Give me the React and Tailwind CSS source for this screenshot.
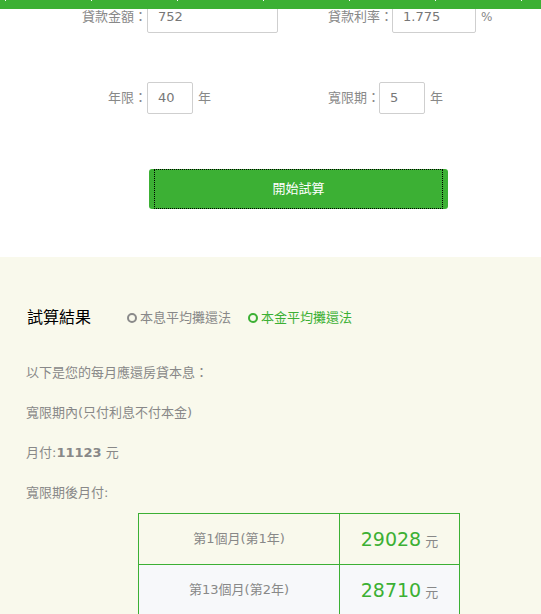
const FONT = "font-['DejaVu_Sans','Noto_Sans_CJK_TC',sans-serif]";

function Field({ value, width }) {
  return (
    <div
      className={`flex h-[32px] shrink-0 items-center rounded-[2px] border border-[#cfcfcf] bg-white pl-[10px] text-[13px] text-[#777] ${width}`}
    >
      {value}
    </div>
  );
}

function Radio({ label, active }) {
  return (
    <span className={`flex items-center text-[13px] ${active ? "text-[#3cb034]" : "text-[#888]"}`}>
      <span
        className={`mr-[3px] inline-block h-[10px] w-[10px] rounded-full border-[2px] ${
          active ? "border-[#3cb034]" : "border-[#8a8a8a]"
        }`}
      />
      {label}
    </span>
  );
}

export default function App() {
  return (
    <div className={`relative min-h-[614px] w-[541px] overflow-hidden bg-white ${FONT}`}>
      {/* sticky nav bar over the scrolled form */}
      <div className="absolute left-0 right-0 top-0 z-10 flex h-[9px] bg-[#3cb034] pl-[5px]">
        {[0, 1, 2, 3, 4, 5, 6].map((i) => (
          <div key={i} className="w-[86px] shrink-0">
            <span className="block h-[1px] w-[1px] bg-white" />
          </div>
        ))}
      </div>

      <section className="bg-white pb-[48px] pt-[1px]">
        <div className="flex h-[32px] items-center whitespace-nowrap text-[13px] text-[#888]">
          <div className="flex w-[278px] shrink-0 items-center">
            <span className="w-[147px] shrink-0 text-right">貸款金額：</span>
            <Field value="752" width="w-[131px]" />
          </div>
          <div className="ml-[50px] flex items-center">
            <span className="w-[64px] shrink-0">貸款利率：</span>
            <Field value="1.775" width="w-[84px]" />
            <span className="ml-[5px] text-[12px]">%</span>
          </div>
        </div>

        <div className="mt-[49px] flex h-[32px] items-center whitespace-nowrap text-[13px] text-[#888]">
          <div className="flex w-[278px] shrink-0 items-center">
            <span className="w-[147px] shrink-0 text-right">年限：</span>
            <Field value="40" width="w-[46px]" />
            <span className="ml-[5px]">年</span>
          </div>
          <div className="ml-[50px] flex items-center">
            <span className="w-[51px] shrink-0">寬限期：</span>
            <Field value="5" width="w-[46px]" />
            <span className="ml-[5px]">年</span>
          </div>
        </div>

        <button
          type="button"
          className="ml-[149px] mt-[55px] flex h-[40px] w-[299px] rounded-[3px] bg-[#3cb034] px-[5px] text-[13px] text-white"
        >
          <span className="flex h-full w-full items-center justify-center border border-dotted border-black">
            開始試算
          </span>
        </button>
      </section>

      <section className="min-h-[357px] bg-[#f9f9ec] pt-[51px]">
        <div className="flex h-[20px] items-center">
          <h2 className="ml-[27px] w-[100px] text-[16px] font-normal text-black">試算結果</h2>
          <div className="flex items-center gap-[17px]">
            <Radio label="本息平均攤還法" />
            <Radio label="本金平均攤還法" active />
          </div>
        </div>

        <div className="mt-[35px] flex flex-col gap-[20px] pl-[26px] text-[13px] leading-[20px] text-[#888]">
          <p>以下是您的每月應還房貸本息：</p>
          <p>寬限期內(只付利息不付本金)</p>
          <p>
            月付:<span className="font-bold">11123</span> 元
          </p>
          <p>寬限期後月付:</p>
        </div>

        <table className="ml-[138px] mt-[10px] w-[322px] border-collapse">
          <tbody>
            {[
              ["第1個月(第1年)", "29028", "bg-[#f9f9ec]"],
              ["第13個月(第2年)", "28710", "bg-[#f7f8fa]"],
            ].map(([label, amount, bg]) => (
              <tr key={label} className={`h-[51px] ${bg}`}>
                <td className="w-[201px] border border-[#3cb034] text-center text-[13px] text-[#888]">
                  {label}
                </td>
                <td className="border border-[#3cb034] text-center">
                  <span className="text-[19px] text-[#3cb034]">{amount}</span>
                  <span className="ml-[4px] text-[13px] text-[#888]">元</span>
                </td>
              </tr>
            ))}
          </tbody>
        </table>
      </section>
    </div>
  );
}
